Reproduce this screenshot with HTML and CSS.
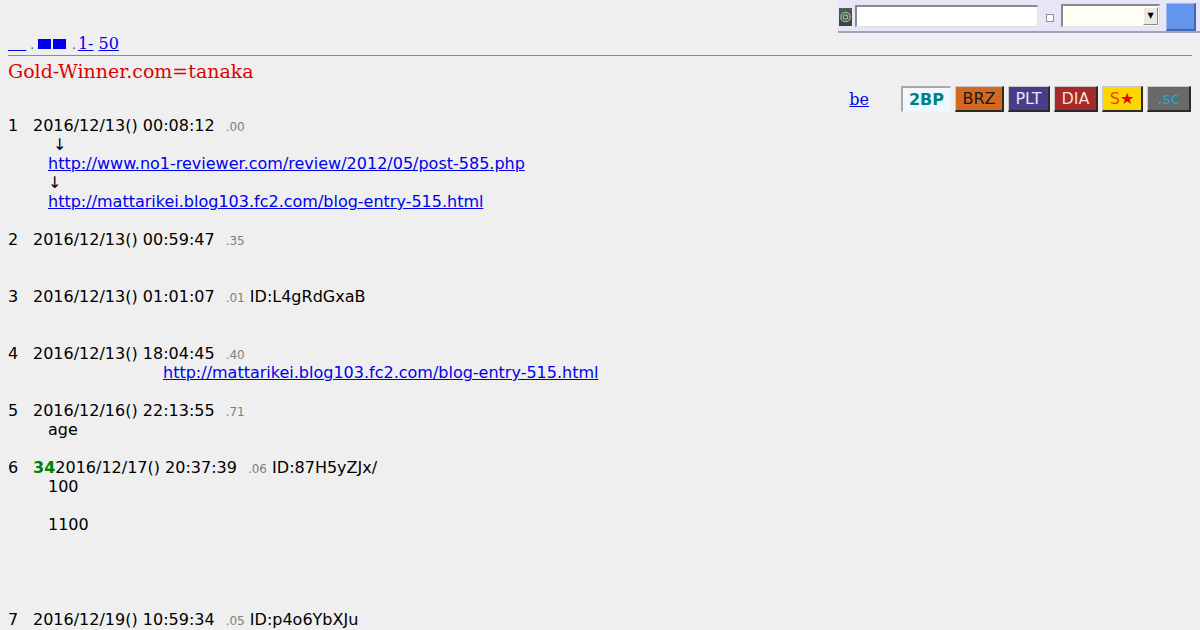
FILE: index.html
```html
<!DOCTYPE html>
<html lang="ja">
<head>
<meta charset="utf-8">
<title>Gold-Winner.com=tanaka</title>
<link rel="stylesheet" href="styles.css">
</head>
<body>
<form class="search">
  <span class="search-icon"><svg width="13" height="18" viewBox="0 0 13 18"><circle cx="6.5" cy="9" r="4.6" fill="none" stroke="#8fc58f" stroke-width="1.3"/><circle cx="6.5" cy="9" r="2.2" fill="none" stroke="#8fc58f" stroke-width="1.2"/></svg></span>
  <span class="search-input"></span>
  <span class="search-check"></span>
  <span class="search-select"><span class="search-arrow">▼</span></span>
  <span class="search-btn"></span>
</form>

<div class="page">
  <div class="nav">
    <a href="#" class="nav-back">&nbsp;&nbsp;&nbsp;</a><span class="nav-dot">.</span><a href="#" class="nav-all"><span class="blk"></span><span class="blk"></span></a><span class="nav-dot">.</span><a href="#" class="nav-first">1-</a><a href="#" class="nav-last">50</a>
  </div>
  <div class="rule"></div>
  <h1 class="title">Gold-Winner.com=tanaka</h1>

  <div class="toolbar">
    <a href="#" class="be">be</a>
    <span class="btn btn-2bp">2BP</span>
    <span class="btn btn-brz">BRZ</span>
    <span class="btn btn-plt">PLT</span>
    <span class="btn btn-dia">DIA</span>
    <span class="btn btn-s"><span class="s-letter">S</span>★</span>
    <span class="btn btn-sc">.sc</span>
  </div>

  <div class="thread">
    <div class="post">
      <div class="head"><span class="num">1</span><span class="date">2016/12/13() 00:08:12</span><span class="ms">.00</span></div>
      <div class="body">&nbsp;↓<br><a href="#">http://www.no1-reviewer.com/review/2012/05/post-585.php</a><br>↓<br><a href="#">http://mattarikei.blog103.fc2.com/blog-entry-515.html</a></div>
    </div>
    <div class="post">
      <div class="head"><span class="num">2</span><span class="date">2016/12/13() 00:59:47</span><span class="ms">.35</span></div>
      <div class="body"><br></div>
    </div>
    <div class="post">
      <div class="head"><span class="num">3</span><span class="date">2016/12/13() 01:01:07</span><span class="ms">.01</span> ID:L4gRdGxaB</div>
      <div class="body"><br></div>
    </div>
    <div class="post">
      <div class="head"><span class="num">4</span><span class="date">2016/12/13() 18:04:45</span><span class="ms">.40</span></div>
      <div class="body"><a href="#" class="indent">http://mattarikei.blog103.fc2.com/blog-entry-515.html</a></div>
    </div>
    <div class="post">
      <div class="head"><span class="num">5</span><span class="date">2016/12/16() 22:13:55</span><span class="ms">.71</span></div>
      <div class="body">age</div>
    </div>
    <div class="post">
      <div class="head"><span class="num">6</span><b class="name">34</b><span class="date">2016/12/17() 20:37:39</span><span class="ms">.06</span> ID:87H5yZJx/</div>
      <div class="body">100<br><br>1100<br><br><br><br></div>
    </div>
    <div class="post">
      <div class="head"><span class="num">7</span><span class="date">2016/12/19() 10:59:34</span><span class="ms">.05</span> ID:p4o6YbXJu</div>
      <div class="body"><br></div>
    </div>
  </div>
</div>
</body>
</html>
```

FILE: styles.css
```css
html { background: #efefef; }
body {
  margin: 0;
  color: #000;
  font-family: "DejaVu Serif", serif;
  font-size: 16px;
}
a { color: #0000ee; }

.page { padding: 0 8px; }

/* search form overlay */
.search {
  position: absolute;
  top: 0;
  left: 838px;
  width: 362px;
  height: 31px;
  margin: 0;
  box-sizing: content-box;
  background: #e6e6f8;
  border-bottom: 2px solid #a3a3b8;
  display: flex;
  align-items: center;
}
.search-icon {
  width: 13px;
  height: 18px;
  margin-left: 1px;
  margin-top: 3px;
  background: linear-gradient(#5a5a5a, #3e3e3e);
  display: flex;
}
.search-input {
  width: 183px;
  height: 22px;
  margin-left: 3px;
  box-sizing: border-box;
  background: #fff;
  border-style: solid;
  border-width: 2px 1px 1px 2px;
  border-color: #8a8a8a #e0e0e0 #e0e0e0 #8a8a8a;
}
.search-check {
  width: 8px;
  height: 8px;
  margin-left: 8px;
  margin-top: 5px;
  box-sizing: border-box;
  background: #fff;
  border: 1px solid #909090;
}
.search-select {
  width: 99px;
  height: 23px;
  margin-left: 7px;
  box-sizing: border-box;
  background: #fffff6;
  border-style: solid;
  border-width: 2px 1px 1px 2px;
  border-color: #8a8a8a #e0e0e0 #e0e0e0 #8a8a8a;
  display: flex;
  justify-content: flex-end;
}
.search-arrow {
  width: 15px;
  height: 18px;
  margin: 1px 1px 0 0;
  box-sizing: border-box;
  background: #ece9e2;
  border: 1px solid;
  border-color: #fff #8a8a8a #8a8a8a #fff;
  font-family: "DejaVu Sans", sans-serif;
  font-size: 8px;
  line-height: 16px;
  text-align: center;
  color: #000;
}
.search-btn {
  width: 30px;
  height: 28px;
  margin-left: 6px;
  margin-top: 2px;
  box-sizing: border-box;
  background: #6495ed;
  border-style: solid;
  border-width: 1px 2px 2px 1px;
  border-color: #9ab8f2 #4567b0 #4567b0 #9ab8f2;
}

/* nav */
.nav {
  padding-top: 34px;
  height: 19px;
  line-height: 19px;
  display: flex;
  align-items: baseline;
}
.nav-back { letter-spacing: 1px; }
.nav-dot {
  font-size: 12px;
  line-height: 1;
  color: #555;
  margin-left: 4px;
}
.nav-all { margin-left: 4px; }
.blk {
  display: inline-block;
  width: 13px;
  height: 10px;
  background: #0000ee;
  margin-right: 2px;
  vertical-align: baseline;
}
.nav-first { margin-left: 2px; }
.nav-last { margin-left: 5px; }

.rule {
  margin-top: 2px;
  height: 0;
  border-top: 1px solid #8c8c8c;
}

.title {
  margin: 4px 0 0;
  font-size: 19px;
  line-height: 22px;
  font-weight: normal;
  color: #e00000;
}

/* toolbar */
.toolbar {
  margin-top: 4px;
  height: 26px;
  padding-right: 1px;
  display: flex;
  justify-content: flex-end;
  align-items: center;
  gap: 4px;
}
.be {
  margin-right: 28px;
}
.btn {
  height: 26px;
  box-sizing: border-box;
  font-family: "DejaVu Sans", sans-serif;
  font-size: 16px;
  line-height: 23px;
  text-align: center;
  border-style: solid;
  border-width: 1px 2px 2px 1px;
  border-color: #c8c8c8 #2a2a2a #2a2a2a #c8c8c8;
}
.btn-2bp {
  width: 50px;
  background: #f0f8ff;
  color: #008080;
  font-weight: bold;
  border-width: 2px 1px 1px 2px;
  border-color: #a9a9a9 #f4f4f4 #f4f4f4 #a9a9a9;
}
.btn-brz { width: 49px; background: #d2691e; color: #1a1a1a; }
.btn-plt { width: 42px; background: #483d8b; color: #e6e6fa; }
.btn-dia { width: 44px; background: #a52a2a; color: #ffdccc; }
.btn-s { width: 41px; background: #ffd700; color: #ee0000; }
.s-letter { color: #f0400a; }
.btn-sc { width: 44px; background: #696969; color: #1fa6d6; }

/* thread */
.thread {
  margin-top: 4px;
  font-family: "DejaVu Sans", sans-serif;
  font-size: 16px;
  line-height: 19px;
}
.post { margin-bottom: 19px; }
.head { height: 19px; }
.num {
  display: inline-block;
  width: 25px;
}
.name { color: #008000; }
.ms {
  font-size: 12px;
  line-height: 1;
  color: #808080;
  margin-left: 11px;
}
.body { padding-left: 40px; }
.indent { margin-left: 115px; }
```
